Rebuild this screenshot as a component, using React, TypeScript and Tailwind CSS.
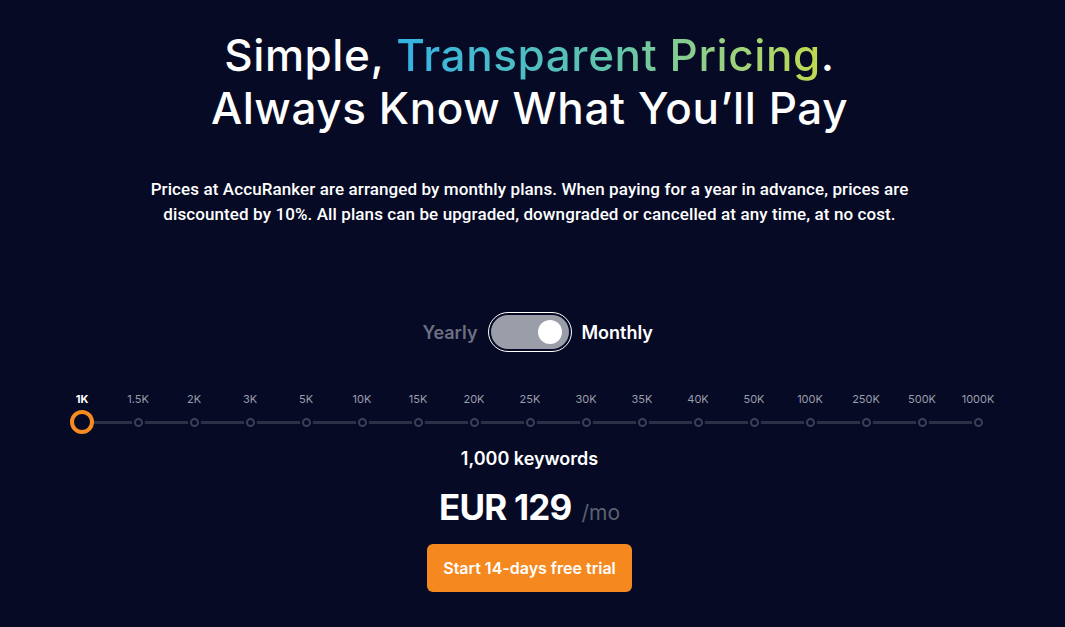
import React from "react";

const ticks = ["1K","1.5K","2K","3K","5K","10K","15K","20K","25K","30K","35K","40K","50K","100K","250K","500K","1000K"];

export default function App() {
  return (
    <div className="min-h-[627px] w-full bg-[#060a25] text-white" style={{ fontFamily: "Inter, 'Noto Sans', sans-serif" }}>
      <div className="w-[1059px] flex flex-col items-center pt-[29px]">
        <h1 className="text-center text-[44px] leading-[53px] font-medium tracking-[0.6px]">
          <div>
            Simple,{" "}
            <span className="bg-gradient-to-r from-[#33b2e4] via-[#5fc4ab] to-[#c0d94c] bg-clip-text text-transparent">Transparent Pricing</span>.
          </div>
          <div>Always Know What You’ll Pay</div>
        </h1>
        <p className="mt-[42px] text-center text-[17px] leading-[25px] font-medium tracking-[0.1px]" style={{ fontFamily: "Roboto, sans-serif" }}>
          Prices at AccuRanker are arranged by monthly plans. When paying for a year in advance, prices are<br />
          discounted by 10%. All plans can be upgraded, downgraded or cancelled at any time, at no cost.
        </p>
        <div className="mt-[85px] w-full grid grid-cols-[1fr_auto_1fr] items-center gap-[10px]">
          <span className="justify-self-end text-[18px] font-semibold text-[#6c6f82]">Yearly</span>
          <div className="w-[84px] h-[40px] rounded-full border border-white p-[2px] bg-[#060a25]">
            <div className="w-full h-full rounded-full bg-[#9a9ea9] flex items-center justify-end pr-[7px]">
              <div className="w-[24px] h-[24px] rounded-full bg-white" />
            </div>
          </div>
          <span className="justify-self-start text-[18px] font-semibold text-white">Monthly</span>
        </div>
        <div className="mt-[40px] self-start pl-[54px]">
          <div className="relative flex">
            <div className="absolute left-[28px] right-[28px] top-[29px] h-[3px] bg-[#2c2f46]" />
            {ticks.map((t, i) => (
              <div key={t} className="relative w-[56px] flex flex-col items-center">
                <span className={`text-[11px] leading-[14px] h-[14px] ${i === 0 ? "font-bold text-white" : "text-[#9a9dab]"}`}>{t}</span>
                <div className="h-[26px] mt-[3px] flex items-center justify-center">
                  {i === 0 ? (
                    <div className="w-[24px] h-[24px] rounded-full border-[4px] border-[#f78b1f] bg-[#060a25]" />
                  ) : (
                    <div className="w-[9px] h-[9px] rounded-full border-2 border-[#3b3e58] bg-[#060a25] shadow-[0_0_0_2px_#060a25]" />
                  )}
                </div>
              </div>
            ))}
          </div>
        </div>
        <div className="mt-[11px] text-[18px] leading-[26px] font-semibold">1,000 keywords</div>
        <div className="mt-[9px] flex items-baseline gap-[10px]">
          <span className="text-[35px] font-bold tracking-[-0.8px]">EUR 129</span>
          <span className="text-[21px] text-[#5d6072]">/mo</span>
        </div>
        <button className="mt-[10px] w-[205px] h-[48px] rounded-[6px] bg-[#f5891f] text-white text-[16px] font-semibold">
          Start 14-days free trial
        </button>
      </div>
    </div>
  );
}
